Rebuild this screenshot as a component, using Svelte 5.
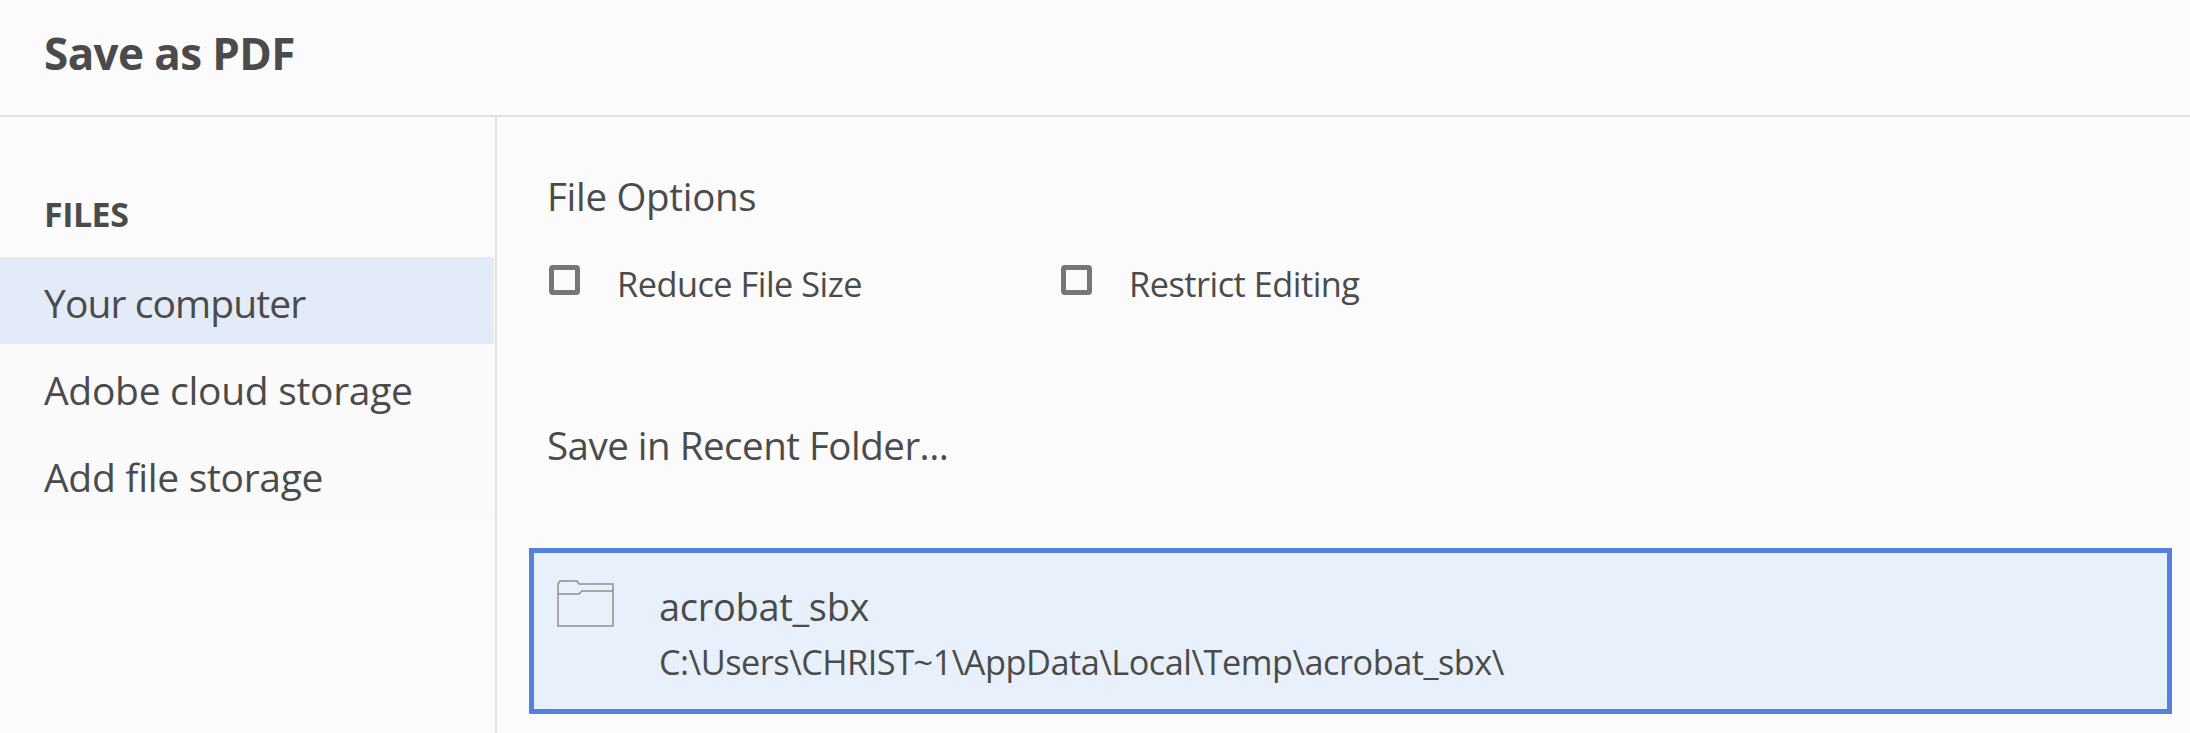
<script>
  const navItems = [
    { label: "Your computer", active: true },
    { label: "Adobe cloud storage", active: false },
    { label: "Add file storage", active: false }
  ];
  const options = ["Reduce File Size", "Restrict Editing"];
</script>

<main class="dialog">
  <header class="title-bar">
    <h1>Save as PDF</h1>
  </header>

  <div class="body">
    <aside class="sidebar">
      <h2>FILES</h2>
      <ul>
        {#each navItems as item}
          <li class:active={item.active}>{item.label}</li>
        {/each}
      </ul>
    </aside>

    <section class="content">
      <h3 class="file-options">File Options</h3>
      <div class="options">
        {#each options as option}
          <label class="option">
            <span class="box"></span>
            <span>{option}</span>
          </label>
        {/each}
      </div>

      <h3 class="recent">Save in Recent Folder...</h3>

      <div class="folder-card">
        <svg class="folder" width="58" height="48" viewBox="0 0 58 48" fill="none" stroke="#8f8f8f" stroke-width="1.5">
          <path d="M1 14V5l2-3h17l2 3h34v42H1V14" />
          <path d="M1 15h21l3-3h31" />
        </svg>
        <div class="folder-text">
          <div class="folder-name">acrobat_sbx</div>
          <div class="folder-path">C:\Users\CHRIST~1\AppData\Local\Temp\acrobat_sbx\</div>
        </div>
      </div>
    </section>
  </div>
</main>

<style>
  :global(body) {
    background: #fbfbfb;
  }

  .dialog {
    width: 2190px;
    height: 733px;
    overflow: hidden;
    font-family: "Open Sans", "Noto Sans", sans-serif;
    color: #4b4b4b;
    display: flex;
    flex-direction: column;
  }

  .title-bar {
    height: 115px;
    box-sizing: content-box;
    border-bottom: 2px solid #e1e1e1;
    display: flex;
    align-items: center;
    padding-left: 44px;
  }

  h1 {
    margin: 0;
    font-size: 44px;
    font-weight: 700;
    letter-spacing: -0.6px;
    position: relative;
    top: -5px;
  }

  .body {
    flex: 1;
    display: flex;
  }

  .sidebar {
    width: 495px;
    border-right: 2px solid #e1e1e1;
    flex-shrink: 0;
  }

  h2 {
    margin: 0;
    padding: 79px 0 0 44px;
    height: 61px;
    box-sizing: content-box;
    font-size: 34px;
    line-height: 36px;
    font-weight: 700;
    letter-spacing: -0.5px;
  }

  ul {
    list-style: none;
    margin: 0 1px 0 0;
    padding: 0;
  }

  li {
    height: 87px;
    line-height: 91px;
    padding-left: 44px;
    font-size: 39px;
    letter-spacing: -0.3px;
    background: #fafafa;
  }

  li.active {
    background: #e3eaf8;
    letter-spacing: -0.9px;
  }

  .content {
    flex: 1;
    padding: 0 18px 0 32px;
  }

  h3 {
    margin: 0;
    font-weight: 400;
    font-size: 38.5px;
    line-height: 48px;
    letter-spacing: -0.3px;
    padding-left: 18px;
  }

  .file-options {
    padding-top: 55px;
  }

  .options {
    display: flex;
    margin-top: 39px;
    padding-left: 20px;
    font-size: 34.3px;
    letter-spacing: -0.5px;
  }

  .option {
    width: 512px;
    display: flex;
    align-items: center;
    gap: 37px;
    height: 48px;
  }

  .box {
    width: 31px;
    height: 30px;
    box-sizing: border-box;
    border: 5px solid #767676;
    border-radius: 4px;
    position: relative;
    top: -3px;
  }

  .recent {
    margin-top: 114px;
    letter-spacing: -0.5px;
  }

  .folder-card {
    margin-top: 79px;
    height: 166px;
    box-sizing: border-box;
    border: 5px solid #5680e0;
    background: #e8f1fb;
    display: flex;
    padding: 26px 0 0 23px;
    gap: 44px;
  }

  .folder {
    flex-shrink: 0;
  }

  .folder-name {
    font-size: 38px;
    line-height: 48px;
    letter-spacing: -0.3px;
    margin-top: 3px;
  }

  .folder-path {
    font-size: 34.3px;
    line-height: 46px;
    margin-top: 9px;
    letter-spacing: -0.5px;
  }
</style>
